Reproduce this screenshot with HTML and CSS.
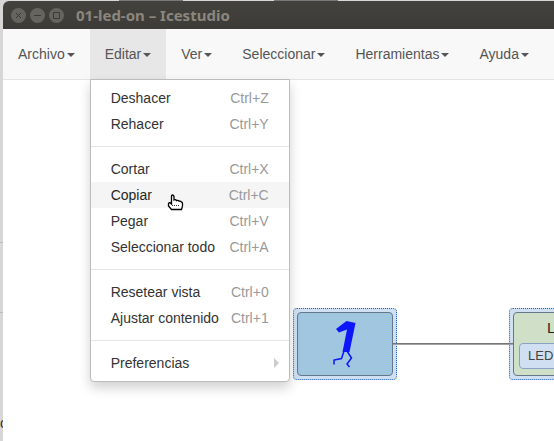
FILE: index.html
```html
<!DOCTYPE html>
<html lang="es">
<head>
<meta charset="utf-8">
<title>01-led-on – Icestudio</title>
<link rel="stylesheet" href="styles.css">
</head>
<body>
<div class="behind" aria-hidden="true"><span class="behind-line"></span><span class="behind-line low"></span><span class="behind-tab"></span><span class="behind-tab second"></span><span class="behind-text">o</span></div>
<div class="window">
  <header class="titlebar">
    <button class="win-btn" aria-label="Cerrar"><svg viewBox="0 0 15 15"><path d="M5 5l5 5M10 5l-5 5"/></svg></button>
    <button class="win-btn" aria-label="Minimizar"><svg viewBox="0 0 15 15"><path d="M4 7.5h7"/></svg></button>
    <button class="win-btn" aria-label="Maximizar"><svg viewBox="0 0 15 15"><path d="M4.5 4.5h6v6h-6z"/></svg></button>
    <h1 class="title">01-led-on – Icestudio</h1>
  </header>
  <nav class="navbar">
    <div class="nav-item"><button class="nav-btn">Archivo<span class="caret"></span></button></div>
    <div class="nav-item">
      <button class="nav-btn open" aria-expanded="true">Editar<span class="caret"></span></button>
      <div class="menu">
        <button class="item">Deshacer<span class="key">Ctrl+Z</span></button>
        <button class="item">Rehacer<span class="key">Ctrl+Y</span></button>
        <hr class="divider">
        <button class="item">Cortar<span class="key">Ctrl+X</span></button>
        <button class="item hover">Copiar<span class="key">Ctrl+C</span></button>
        <button class="item">Pegar<span class="key">Ctrl+V</span></button>
        <button class="item">Seleccionar todo<span class="key">Ctrl+A</span></button>
        <hr class="divider">
        <button class="item">Resetear vista<span class="key">Ctrl+0</span></button>
        <button class="item">Ajustar contenido<span class="key">Ctrl+1</span></button>
        <hr class="divider">
        <button class="item">Preferencias<span class="arrow"></span></button>
      </div>
    </div>
    <div class="nav-item"><button class="nav-btn">Ver<span class="caret"></span></button></div>
    <div class="nav-item"><button class="nav-btn">Seleccionar<span class="caret"></span></button></div>
    <div class="nav-item"><button class="nav-btn">Herramientas<span class="caret"></span></button></div>
    <div class="nav-item"><button class="nav-btn">Ayuda<span class="caret"></span></button></div>
  </nav>
  <main class="canvas">
    <div class="node source">
      <div class="block blue">
        <svg class="one" viewBox="0 0 24 48" role="img" aria-label="1"><path class="digit" d="M3 9L13.500 1l9 2L16.500 32H9.500L14 9.500 6 12.500z"/><path class="legs" d="M11 31L8.500 38.500 1 40v4.500M14 31l4.500 7-4.500 6 2.500 3"/></svg>
      </div>
    </div>
    <div class="node output">
      <div class="block green">
        <div class="label">L</div>
        <button class="pin">LED</button>
      </div>
    </div>
    <div class="wire"></div>
  </main>
</div>
<svg class="cursor" viewBox="0 0 17 17" aria-hidden="true"><path class="hand" d="M4.500 10V2.500Q4.500 1 5.500 1T7 2.500V6q2-.8 2.500.6 2-.6 2.700.6 1.600-.4 2.200.8 1.100.2 1.100 1.500V12l-1 3.500H4.500L1.500 12V9.500Q2 8.500 3 8.700L4.500 10z"/><path class="dots" d="M5 11.500h1M7 11.500h1M9 11.500h1M11 11.500h1"/></svg>
</body>
</html>
```
FILE: styles.css
```css
* { box-sizing: border-box; }

body {
  margin: 0;
  height: 100vh;
  overflow: hidden;
  padding: 1px 0 0 3px;
  background: #d7d7d7;
  color: #333;
  font: 14px/20px "Liberation Sans", Arial, sans-serif;
}

button {
  margin: 0;
  border: 0;
  background: none;
  color: inherit;
  font: inherit;
}

/* what shows of the desktop behind the window */
.behind { position: absolute; inset: 0; overflow: hidden; }
.behind-line { position: absolute; top: 242px; width: 3px; height: 1px; background: #bbb; }
.behind-line.low { top: 312px; }
.behind-tab { position: absolute; left: 119px; width: 64px; height: 1px; background: #777; }
.behind-tab.second { left: 274px; }
.behind-text { position: absolute; top: 413px; left: 0; }

.window {
  position: relative;
  display: flex;
  flex-direction: column;
  height: 100%;
  border-radius: 6px 0 0 0;
  overflow: hidden;
  background: #fff;
}

.titlebar {
  display: flex;
  align-items: center;
  flex: none;
  gap: 4px;
  height: 28px;
  padding-left: 8px;
  background: linear-gradient(#44423d, #3c3b37);
}
.win-btn {
  width: 15px;
  height: 15px;
  padding: 0;
  border-radius: 50%;
  background: #66645e;
}
.win-btn svg { display: block; fill: none; stroke: #3b3a36; stroke-width: 1; }
.title {
  margin: 0 0 0 8px;
  color: #8b877e;
  font: bold 15px/20px "Noto Sans", "Open Sans", sans-serif;
  white-space: nowrap;
}

.navbar {
  display: flex;
  flex: none;
  border-bottom: 1px solid #e4e4e4;
  background: #f8f8f8;
}
.nav-item { position: relative; flex: none; }
.nav-btn {
  display: flex;
  align-items: center;
  height: 50px;
  padding: 0 15px;
  color: #555;
}
.nav-btn.open { background: #e7e7e7; }
.caret {
  margin: 1px 0 0 2px;
  border: 4px solid transparent;
  border-top-color: currentColor;
  border-bottom: 0;
}

.menu {
  position: absolute;
  top: 50px;
  left: 0;
  z-index: 3;
  width: 200px;
  padding: 5px 0;
  border: 1px solid #bcbcbc;
  border-radius: 0 0 4px 4px;
  background: #fff;
  box-shadow: 0 6px 12px rgba(0, 0, 0, .18);
}
.item {
  display: flex;
  align-items: center;
  justify-content: space-between;
  width: 100%;
  padding: 3px 20px;
  white-space: nowrap;
}
.item.hover { background: #f5f5f5; color: #262626; }
.key { color: #999; }
.arrow {
  margin-right: -10px;
  border: 5px solid transparent;
  border-left-color: #ccc;
  border-right: 0;
}
.divider { height: 1px; margin: 9px 0; border: 0; background: #e5e5e5; }

/* design canvas: nodes sit at free coordinates */
.canvas { position: relative; flex: 1; overflow: hidden; background: #fff; }
.wire {
  position: absolute;
  top: 263px;
  left: 390px;
  width: 120px;
  height: 2px;
  border-top: 1px solid #777;
  background: #a3a3a3;
}
.node {
  position: absolute;
  top: 228px;
  width: 104px;
  height: 72px;
  padding: 3px;
  border: 1px dotted #2467b4;
  border-radius: 4px;
  background: #d0e0f2;
}
.source { left: 290px; }
.output { left: 506px; }
.block {
  height: 100%;
  border: 1px solid #64788c;
  border-radius: 4px;
}
.blue { display: flex; justify-content: center; align-items: center; background: #a0c6e0; }
.green { padding: 5px; background: #d0dfc7; }
.one { width: 24px; height: 48px; }
.digit { fill: #0b16fa; }
.legs { fill: none; stroke: #0b16fa; stroke-width: 1.5; }
.label { padding-left: 28px; color: #222; font-size: 15px; }
.pin {
  display: block;
  width: 100%;
  height: 26px;
  margin-top: 5px;
  padding: 0 8px;
  border: 1px solid #8aa3c4;
  border-radius: 4px;
  background: #d0e0f2;
  color: #444;
  font-size: 13px;
  text-align: left;
}

.cursor { position: absolute; top: 194px; left: 167px; z-index: 5; width: 17px; height: 17px; }
.hand { fill: #fff; stroke: #000; stroke-width: 1.3; }
.dots { stroke: #333; }
```
